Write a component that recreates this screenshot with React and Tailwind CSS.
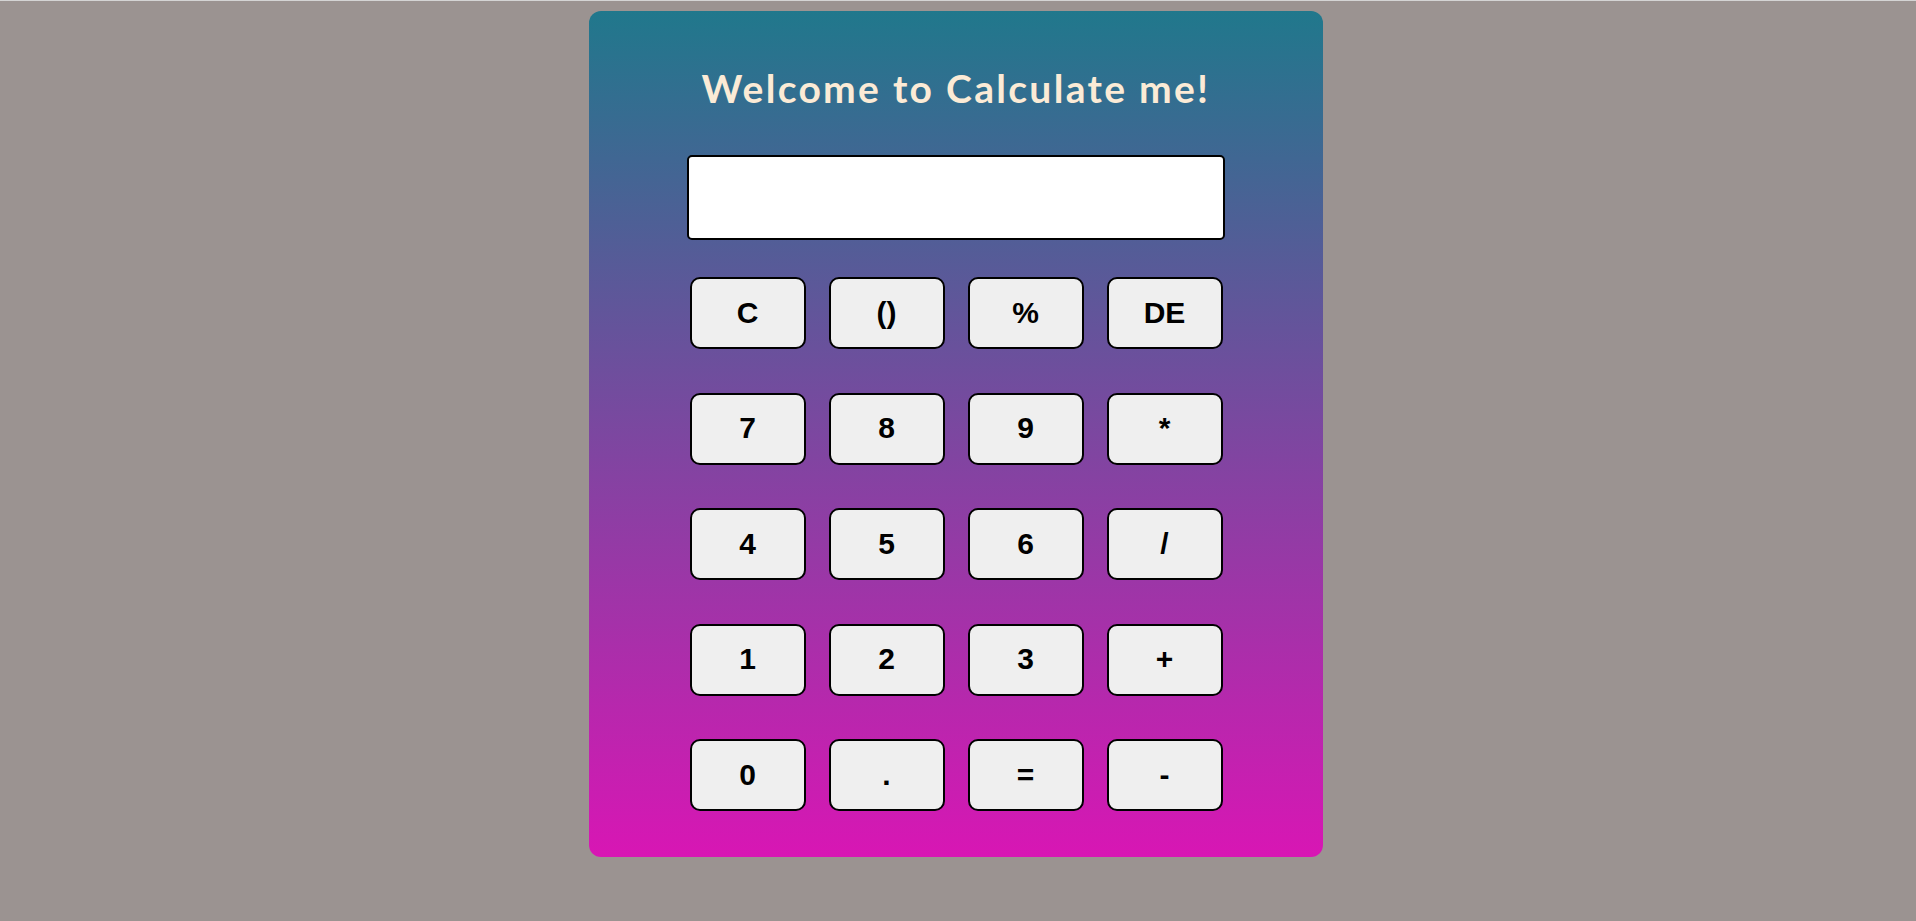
import React from "react";

const rows = [
  ["C", "()", "%", "DE"],
  ["7", "8", "9", "*"],
  ["4", "5", "6", "/"],
  ["1", "2", "3", "+"],
  ["0", ".", "=", "-"],
];

export default function App() {
  return (
    <div className="min-h-screen w-full bg-[#9b9391] border-t border-[#d4d4d4] pt-[10px] flex justify-center pr-[4px]">
      <div className="w-[734px] h-[846px] rounded-[12px] bg-[linear-gradient(to_bottom,#20788c,#d816b4)] flex flex-col items-center pt-[55px]">
        <h1 className="text-[39px] leading-[44px] font-bold text-[#fbebd6] [font-family:Lato,'Open_Sans',sans-serif] tracking-[2.3px]">
          Welcome to Calculate me!
        </h1>
        <div className="mt-[45px] w-[538px] h-[85px] bg-white border-2 border-black rounded-[5px]"></div>
        <div className="mt-[37px] grid grid-cols-[repeat(4,116px)] gap-x-[23px] gap-y-[43.5px]">
          {rows.flat().map((k, i) => (
            <button
              key={i}
              className="w-[116px] h-[72px] bg-[#efefef] border-2 border-black rounded-[10px] text-black text-[30px] font-bold [font-family:'Liberation_Sans',Arial,sans-serif] flex items-center justify-center pb-[2px]"
            >
              {k}
            </button>
          ))}
        </div>
      </div>
    </div>
  );
}
